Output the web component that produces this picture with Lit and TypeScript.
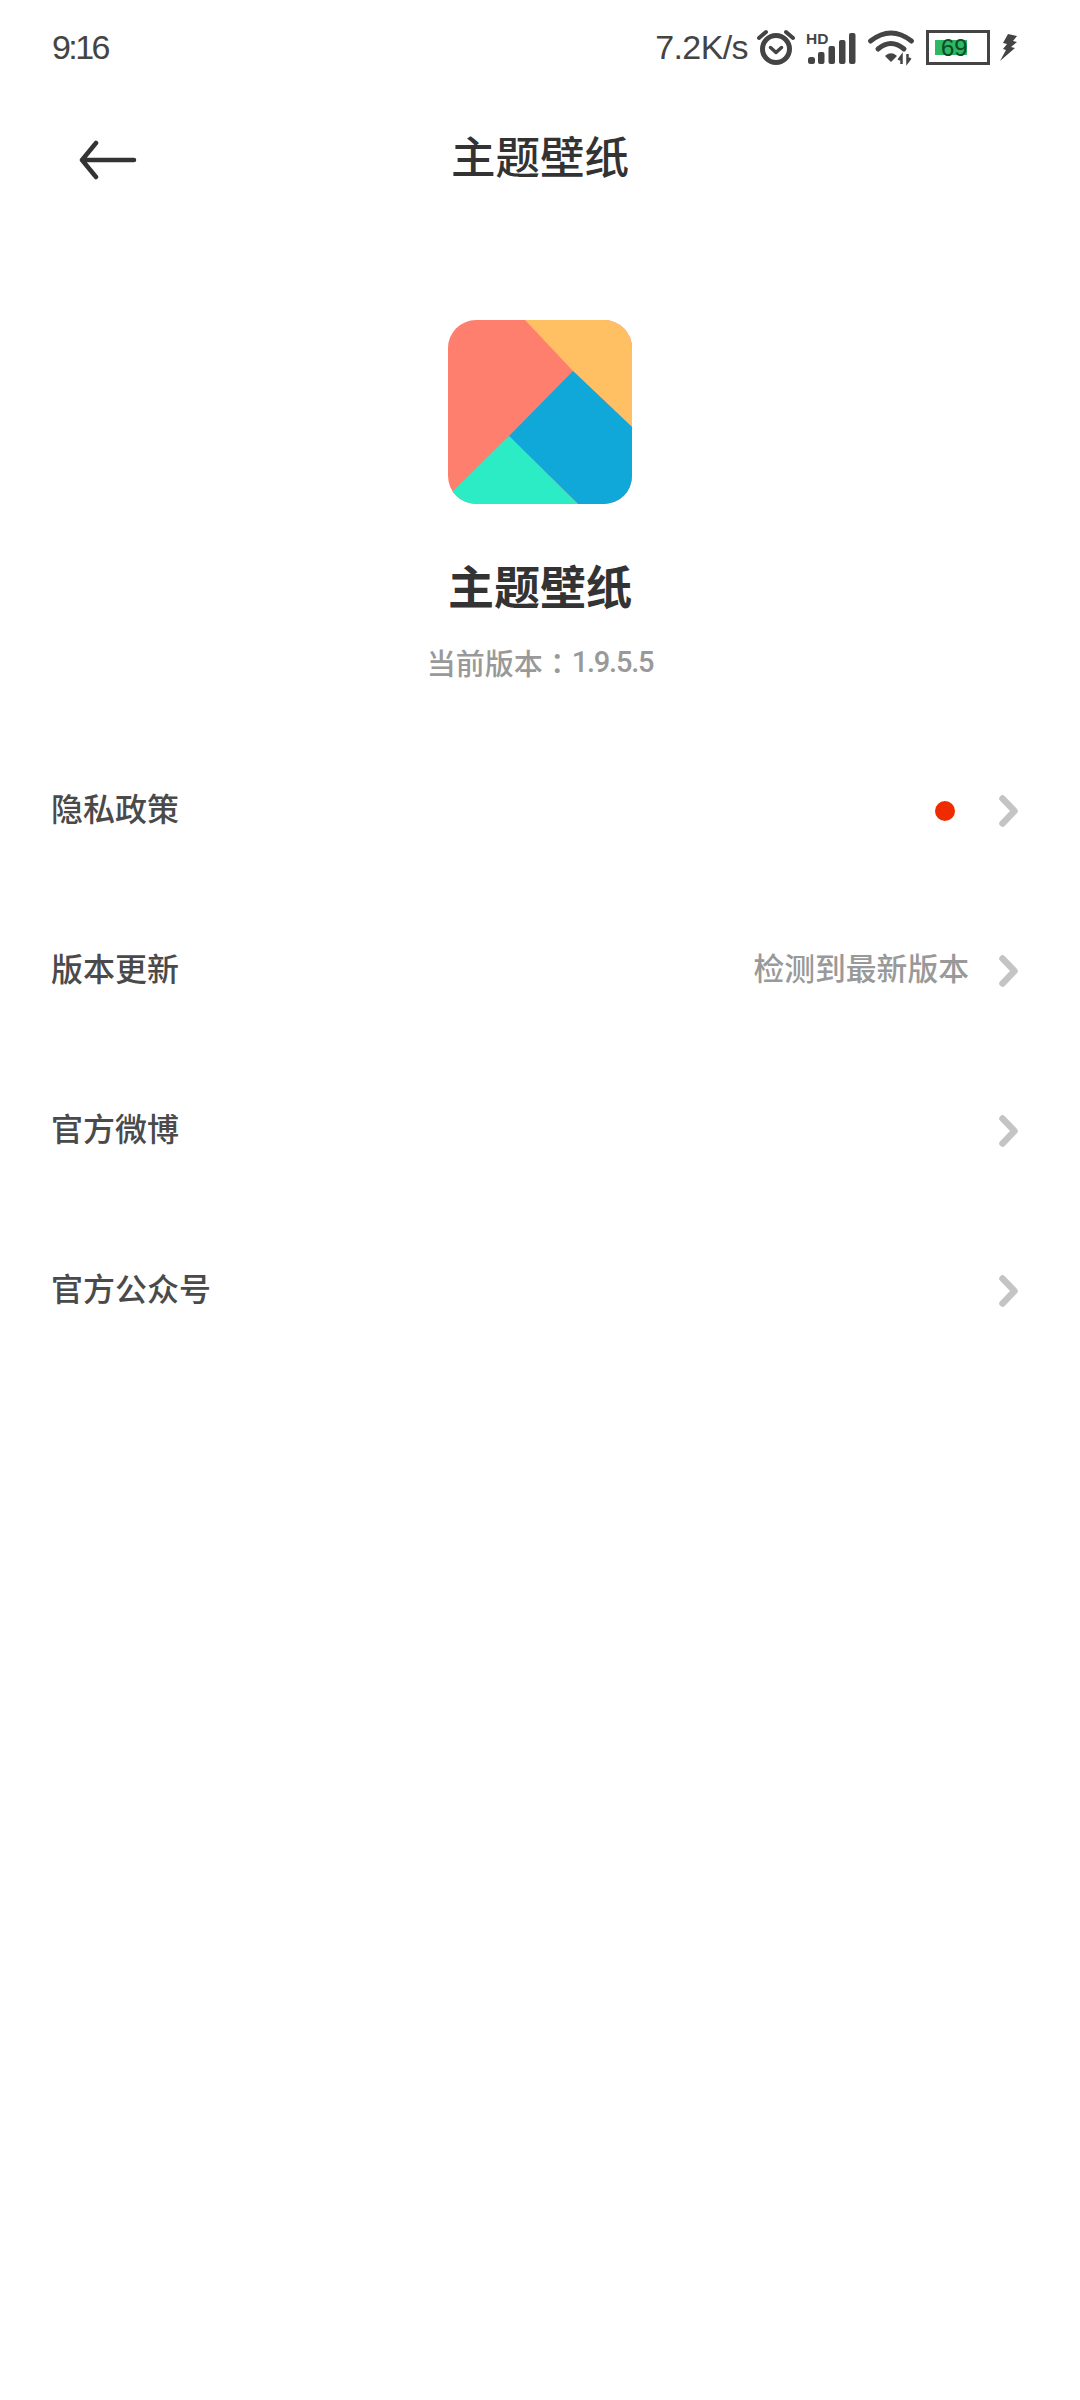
import { LitElement, html, css, svg } from "lit";
import { customElement } from "lit/decorators.js";

const chevron = html`<svg class="chev" viewBox="0 0 19 32" width="19" height="32"><path d="M3.5 3.5 L15.5 16 L3.5 28.5" fill="none" stroke="#c4c4c4" stroke-width="6.5" stroke-linecap="round" stroke-linejoin="round"/></svg>`;

const rows: { label: string; dot?: boolean; value?: string }[] = [
  { label: "隐私政策", dot: true },
  { label: "版本更新", value: "检测到最新版本" },
  { label: "官方微博" },
  { label: "官方公众号" },
];

@customElement("app-root")
export class AppRoot extends LitElement {
  static styles = css`
    :host { display: block; width: 1080px; min-height: 2400px; background: #fff; font-family: "Noto Sans CJK SC", "Liberation Sans", sans-serif; }
    .status { height: 94px; display: flex; align-items: center; padding: 0 0 0 52px; color: #444; font-family: "Liberation Sans", sans-serif; }
    .time { font-size: 34px; letter-spacing: -2.6px; flex: 1; }
    .speed { font-size: 34px; letter-spacing: -0.6px; margin-right: 9px; }
    .status svg { display: block; flex: none; overflow: visible; }
    .signal { margin-left: 11px; }
    .wifi { margin-left: 12px; }
    .battery { margin-left: 11px; width: 64px; height: 35px; box-sizing: border-box; border: 3.5px solid #444; display: flex; align-items: center; padding-left: 6px; flex: none; }
    .fill { width: 32px; height: 15px; background: #2eb865; color: #0d4a26; font-size: 24px; line-height: 15px; padding-left: 6px; box-sizing: border-box; white-space: nowrap; }
    .bolt { margin-left: 10px; margin-right: 63px; }
    .nav { height: 130px; display: flex; align-items: center; justify-content: center; position: relative; }
    .back { position: absolute; left: 78px; top: 46px; }
    .nav-title { font-size: 44.5px; font-weight: 500; color: #333; line-height: 60px; padding-bottom: 8px; }
    .about { display: flex; flex-direction: column; align-items: center; padding-top: 96px; }
    .logo { display: block; }
    .app-name { margin-top: 50px; font-size: 46px; font-weight: 700; color: #333; line-height: 60px; }
    .version { margin-top: 28px; font-size: 29px; font-weight: 500; color: #999; line-height: 40px; display: flex; }
    .colon { font-family: "Noto Sans CJK TC", sans-serif; }
    .digits { font-family: "Roboto", sans-serif; font-weight: 500; letter-spacing: -1.2px; }
    .list { margin-top: 49px; }
    .row { height: 160px; display: flex; align-items: center; padding: 0 62px 0 51px; }
    .label { flex: 1; font-size: 32px; font-weight: 500; color: #4a4a4a; line-height: 44px; padding-bottom: 8px; }
    .value { font-size: 30.8px; font-weight: 500; color: #999; line-height: 44px; margin-right: 30px; padding-bottom: 8px; }
    .dot { width: 20px; height: 20px; border-radius: 50%; background: #ee2c00; margin-right: 44px; }
    .chev { display: block; }
  `;

  render() {
    return html`
      <div class="status">
        <span class="time">9:16</span>
        <span class="speed">7.2K/s</span>
        <svg width="38" height="36" viewBox="0 0 38 36">
          <circle cx="19" cy="20" r="13.5" fill="none" stroke="#444" stroke-width="5"/>
          <path d="M13.5 18.5 L19 23.5 L24.5 18.5" fill="none" stroke="#444" stroke-width="3.5" stroke-linecap="round" stroke-linejoin="round"/>
          <path d="M2 9 L9 3 M36 9 L29 3" fill="none" stroke="#444" stroke-width="4" stroke-linecap="round"/>
        </svg>
        <svg class="signal" width="50" height="34" viewBox="0 -2 50 34">
          <text x="0" y="11.5" font-family="Liberation Sans" font-weight="700" font-size="15.5" fill="#444">HD</text>
          <rect x="2" y="25" width="7" height="7" rx="2.5" fill="#444"/>
          <rect x="12" y="20" width="6.5" height="12" rx="2" fill="#444"/>
          <rect x="22.5" y="14" width="6.5" height="18" rx="2" fill="#444"/>
          <rect x="33" y="8" width="6.5" height="24" rx="2" fill="#444"/>
          <rect x="43" y="1" width="6.5" height="31" rx="2" fill="#444"/>
        </svg>
        <svg class="wifi" width="47" height="34" viewBox="0 0 47 34">
          <path d="M2.5 11 Q23 -5 43.5 11" fill="none" stroke="#444" stroke-width="5" stroke-linecap="round"/>
          <path d="M10 19 Q23 8 36 19" fill="none" stroke="#444" stroke-width="5" stroke-linecap="round"/>
          <path d="M18 26 Q23 22 28 26 L23 31 Z" fill="#444" stroke="#444" stroke-width="1.5" stroke-linejoin="round"/>
          <path d="M33.5 34 V26 L30.5 30 M39.5 24 V32 L42.5 28" fill="none" stroke="#444" stroke-width="2.5"/>
        </svg>
        <div class="battery"><div class="fill">69</div></div>
        <svg class="bolt" width="17" height="27" viewBox="0 0 17 27">
          <path d="M8 0 L17 2 L13 7 L17 8 L11 13 L15 14 L0 27 L6 16 L3 15 L7 10 L3 9 Z" fill="#444"/>
        </svg>
      </div>
      <div class="nav">
        <svg class="back" width="60" height="40" viewBox="0 0 60 40">
          <path d="M18 3 L4 20 L18 37 M4 20 H56" fill="none" stroke="#333" stroke-width="4.5" stroke-linecap="round" stroke-linejoin="round"/>
        </svg>
        <span class="nav-title">主题壁纸</span>
      </div>
      <div class="about">
        <svg class="logo" width="184" height="184" viewBox="0 0 184 184">
          <defs><clipPath id="r"><rect width="184" height="184" rx="28"/></clipPath></defs>
          <g clip-path="url(#r)">
            ${svg`<rect width="184" height="184" fill="#ff7f6f"/>
            <polygon points="77,0 184,0 184,107 125,51" fill="#ffbf63"/>
            <polygon points="125,51 184,107 184,184 130,184 61,116" fill="#0fa8d8"/>
            <polygon points="61,116 130,184 0,184 0,176" fill="#2becc4"/>`}
          </g>
        </svg>
        <div class="app-name">主题壁纸</div>
        <div class="version"><span>当前版本</span><span class="colon">：</span><span class="digits">1.9.5.5</span></div>
      </div>
      <div class="list">
        ${rows.map((r) => html`
          <div class="row">
            <span class="label">${r.label}</span>
            ${r.dot ? html`<span class="dot"></span>` : ""}
            ${r.value ? html`<span class="value">${r.value}</span>` : ""}
            ${chevron}
          </div>`)}
      </div>
    `;
  }
}
